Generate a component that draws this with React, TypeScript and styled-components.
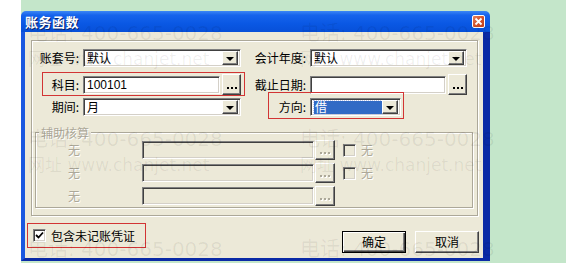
import React from "react";
import styled, { createGlobalStyle, css } from "styled-components";

const GlobalStyle = createGlobalStyle`
  html, body { margin: 0; padding: 0; background: #fff; }
  body {
    font-family: "Noto Sans CJK SC", "Noto Sans", sans-serif;
    font-size: 12px;
    color: #000;
  }
  * { box-sizing: border-box; }
`;

const Page = styled.div`
  position: relative;
  width: 566px;
  height: 263px;
  overflow: hidden;
  display: flex;
  background: #fff;
`;

const LeftStrip = styled.div`
  width: 21px;
  flex: none;
  background: #fff;
`;

const Stage = styled.div`
  flex: 1;
  background: #c4e6ca;
  padding-top: 11px;
`;

const Window = styled.div`
  width: 469px;
  height: 250px;
  display: flex;
  flex-direction: column;
`;

const TitleBar = styled.div`
  height: 21px;
  flex: none;
  display: flex;
  align-items: center;
  justify-content: space-between;
  padding: 0 5px 0 4px;
  border-radius: 5px 5px 0 0;
  background: linear-gradient(
    to bottom,
    #3b86f5 0%,
    #1563ec 20%,
    #0a58e4 60%,
    #0750d8 100%
  );
`;

const Title = styled.span`
  color: #fff;
  font-size: 13px;
  font-weight: 700;
  line-height: 1;
  letter-spacing: 0.5px;
  text-shadow: 1px 1px 0 #0a246a;
`;

const CloseBtn = styled.div`
  width: 13px;
  height: 13px;
  border: 1px solid #fff;
  border-radius: 2px;
  background: linear-gradient(135deg, #e8825c 0%, #d2532c 50%, #c0401a 100%);
  display: flex;
  align-items: center;
  justify-content: center;
`;

const Body = styled.div`
  flex: 1;
  display: flex;
  flex-direction: column;
  background: #ece9d8;
  border-left: 4px solid #1a58e0;
  border-right: 7px solid #0a2aa6;
  border-bottom: 3px solid #0a2aa6;
`;

const etched = css`
  border: 1px solid #aca899;
  box-shadow: 1px 1px 0 #fff, inset 1px 1px 0 #fff;
`;

const Frame = styled.div`
  ${etched};
  margin: 8px 0 0 6px;
  width: 447px;
  height: 176px;
  display: flex;
  flex-direction: column;
`;

const FieldRow = styled.div<{ $mt: number; $h: number }>`
  position: relative;
  display: grid;
  grid-template-columns: 48px 158px 63px 157px;
  column-gap: 3px;
  align-items: center;
  margin-top: ${(p) => p.$mt}px;
  height: ${(p) => p.$h}px;
`;

const Label = styled.span`
  text-align: right;
  white-space: nowrap;
  line-height: 1;
  padding-right: 1px;
`;

const sunken = css`
  border-style: solid;
  border-width: 1px;
  border-color: #808080 #fff #fff #808080;
  box-shadow: inset 1px 1px 0 #404040, inset -1px -1px 0 #d4d0c8;
`;

const raised = css`
  border-style: solid;
  border-width: 1px;
  border-color: #fff #404040 #404040 #fff;
  box-shadow: inset -1px -1px 0 #808080;
  background: #ece9d8;
`;

const Select = styled.div<{ $w?: number }>`
  ${sunken};
  width: ${(p) => (p.$w ? `${p.$w}px` : "100%")};
  height: 18px;
  background: #fff;
  display: flex;
  align-items: center;
  padding: 0 2px 0 3px;
  line-height: 1;
`;

const DropBtn = styled.div`
  ${raised};
  margin-left: auto;
  width: 16px;
  height: 14px;
  flex: none;
  display: flex;
  align-items: center;
  justify-content: center;
`;

const Arrow = styled.div`
  width: 0;
  height: 0;
  border-left: 4px solid transparent;
  border-right: 4px solid transparent;
  border-top: 4px solid #000;
  margin-top: 1px;
`;

const Highlight = styled.span`
  display: flex;
  align-items: center;
  width: 73px;
  height: 13px;
  padding-left: 1px;
  background: #316ac5;
  color: #fff;
  outline: 1px dotted #c0c8e8;
  outline-offset: 0;
`;

const InputGroup = styled.div`
  display: flex;
  align-items: center;
  gap: 2px;
`;

const TextInput = styled.div<{ $disabled?: boolean; $w?: number }>`
  ${sunken};
  height: 18px;
  ${(p) => (p.$w ? `width: ${p.$w}px; flex: none;` : "flex: 1;")}
  background: ${(p) => (p.$disabled ? "#ece9d8" : "#fff")};
  display: flex;
  align-items: center;
  padding-left: 3px;
  line-height: 1;
  font-family: "Liberation Sans", "Noto Sans CJK SC", sans-serif;
`;

const DotsBtn = styled.div<{ $disabled?: boolean; $w?: number; $h?: number }>`
  ${raised};
  width: ${(p) => p.$w ?? 19}px;
  height: ${(p) => p.$h ?? 21}px;
  flex: none;
  display: flex;
  align-items: flex-end;
  justify-content: center;
  gap: 2px;
  padding-bottom: 5px;
`;

const Dot = styled.i<{ $disabled?: boolean }>`
  display: block;
  width: 2px;
  height: 2px;
  background: ${(p) => (p.$disabled ? "#aca899" : "#000")};
  ${(p) => p.$disabled && "box-shadow: 1px 1px 0 #fff;"}
`;

const RedBox = styled.div<{ $l: number; $t: number; $w: number; $h: number }>`
  position: absolute;
  left: ${(p) => p.$l}px;
  top: ${(p) => p.$t}px;
  width: ${(p) => p.$w}px;
  height: ${(p) => p.$h}px;
  border: 1px solid #d23434;
  pointer-events: none;
`;

const Group = styled.div`
  ${etched};
  position: relative;
  margin: 16px 0 0 3px;
  width: 438px;
  height: 76px;
  padding-top: 7px;
  display: flex;
  flex-direction: column;
  gap: 3px;
`;

const Legend = styled.span`
  position: absolute;
  left: 3px;
  top: -7px;
  padding: 0 2px;
  background: #ece9d8;
  color: #aca899;
  text-shadow: 1px 1px 0 #fff;
  line-height: 13px;
`;

const GroupRow = styled.div`
  display: flex;
  align-items: center;
  height: 20px;
`;

const DimLabel = styled.span`
  width: 44px;
  flex: none;
  text-align: right;
  color: #aca899;
  text-shadow: 1px 1px 0 #fff;
  line-height: 1;
`;

const DimSlot = styled.div`
  margin-left: 62px;
  display: flex;
  align-items: center;
  gap: 1px;
`;

const Check = styled.div<{ $disabled?: boolean }>`
  ${sunken};
  width: 13px;
  height: 13px;
  flex: none;
  background: ${(p) => (p.$disabled ? "#ece9d8" : "#fff")};
  display: flex;
  align-items: center;
  justify-content: center;
`;

const DimCheck = styled.div`
  display: flex;
  align-items: center;
  gap: 5px;
  margin-left: 8px;
  color: #aca899;
  text-shadow: 1px 1px 0 #fff;
  line-height: 1;
`;

const Footer = styled.div`
  display: flex;
  align-items: flex-start;
  padding: 13px 4px 0 8px;
`;

const CheckLabel = styled.label`
  position: relative;
  display: flex;
  align-items: center;
  gap: 5px;
  height: 13px;
  line-height: 1;
`;

const Buttons = styled.div`
  margin-left: auto;
  margin-top: 2px;
  display: flex;
  gap: 9px;
`;

const Button = styled.div<{ $default?: boolean }>`
  width: 64px;
  height: 22px;
  display: flex;
  align-items: center;
  justify-content: center;
  line-height: 1;
  background: #ece9d8;
  ${(p) =>
    p.$default
      ? css`
          border: 1px solid #000;
          box-shadow: inset 1px 1px 0 #fff, inset -1px -1px 0 #404040,
            inset -2px -2px 0 #808080;
        `
      : raised}
`;

const Watermark = styled.div<{ $x: number; $y: number }>`
  position: absolute;
  left: ${(p) => p.$x}px;
  top: ${(p) => p.$y}px;
  pointer-events: none;
  color: rgba(0, 0, 0, 0.065);
  font-family: "DejaVu Sans", "Noto Sans CJK SC", sans-serif;
  white-space: nowrap;
  display: flex;
  flex-direction: column;
`;

const WmLine = styled.span<{ $size: number }>`
  font-size: ${(p) => p.$size}px;
  line-height: 26px;
  height: 26px;
`;

const wmSpots = [
  { x: 28, y: 20, second: true },
  { x: 300, y: 20, second: true },
  { x: 28, y: 126, second: true },
  { x: 300, y: 126, second: true },
  { x: 28, y: 236, second: false },
  { x: 300, y: 236, second: false },
];

function Dots({ disabled }: { disabled?: boolean }) {
  return (
    <>
      <Dot $disabled={disabled} />
      <Dot $disabled={disabled} />
      <Dot $disabled={disabled} />
    </>
  );
}

export default function App() {
  return (
    <>
      <GlobalStyle />
      <Page>
        <LeftStrip />
        <Stage>
          <Window>
            <TitleBar>
              <Title>账务函数</Title>
              <CloseBtn>
                <svg width="9" height="9" viewBox="0 0 9 9">
                  <path d="M1.5 1.5 L7.5 7.5 M7.5 1.5 L1.5 7.5" stroke="#fff" strokeWidth="1.8" />
                </svg>
              </CloseBtn>
            </TitleBar>
            <Body>
              <Frame>
                <FieldRow $mt={8} $h={18}>
                  <Label>账套号:</Label>
                  <Select>
                    默认
                    <DropBtn>
                      <Arrow />
                    </DropBtn>
                  </Select>
                  <Label>会计年度:</Label>
                  <Select>
                    默认
                    <DropBtn>
                      <Arrow />
                    </DropBtn>
                  </Select>
                </FieldRow>
                <FieldRow $mt={7} $h={21}>
                  <Label>科目:</Label>
                  <InputGroup>
                    <TextInput>100101</TextInput>
                    <DotsBtn>
                      <Dots />
                    </DotsBtn>
                  </InputGroup>
                  <Label>截止日期:</Label>
                  <InputGroup>
                    <TextInput />
                    <DotsBtn>
                      <Dots />
                    </DotsBtn>
                  </InputGroup>
                  <RedBox $l={10} $t={-2} $w={203} $h={24} />
                </FieldRow>
                <FieldRow $mt={3} $h={18}>
                  <Label>期间:</Label>
                  <Select>
                    月
                    <DropBtn>
                      <Arrow />
                    </DropBtn>
                  </Select>
                  <Label>方向:</Label>
                  <Select $w={91}>
                    <Highlight>借</Highlight>
                    <DropBtn>
                      <Arrow />
                    </DropBtn>
                  </Select>
                  <RedBox $l={236} $t={-6} $w={136} $h={27} />
                </FieldRow>
                <Group>
                  <Legend>辅助核算</Legend>
                  {[true, true, false].map((hasCheck, i) => (
                    <GroupRow key={i}>
                      <DimLabel>无</DimLabel>
                      <DimSlot>
                        <TextInput $disabled $w={172} />
                        <DotsBtn $disabled $w={20} $h={20}>
                          <Dots disabled />
                        </DotsBtn>
                      </DimSlot>
                      {hasCheck && (
                        <DimCheck>
                          <Check $disabled />
                          无
                        </DimCheck>
                      )}
                    </GroupRow>
                  ))}
                </Group>
              </Frame>
              <Footer>
                <CheckLabel>
                  <Check>
                    <svg width="9" height="9" viewBox="0 0 9 9">
                      <path d="M1 4 L3.5 6.5 L8 1.5" stroke="#000" strokeWidth="1.8" fill="none" />
                    </svg>
                  </Check>
                  包含未记账凭证
                  <RedBox $l={-6} $t={-6} $w={119} $h={25} />
                </CheckLabel>
                <Buttons>
                  <Button $default>确定</Button>
                  <Button>取消</Button>
                </Buttons>
              </Footer>
            </Body>
          </Window>
        </Stage>
        {wmSpots.map((s, i) => (
          <Watermark key={i} $x={s.x} $y={s.y}>
            <WmLine $size={20}>电话: 400-665-0028</WmLine>
            {s.second && <WmLine $size={17}>网址 www.chanjet.net</WmLine>}
          </Watermark>
        ))}
      </Page>
    </>
  );
}
